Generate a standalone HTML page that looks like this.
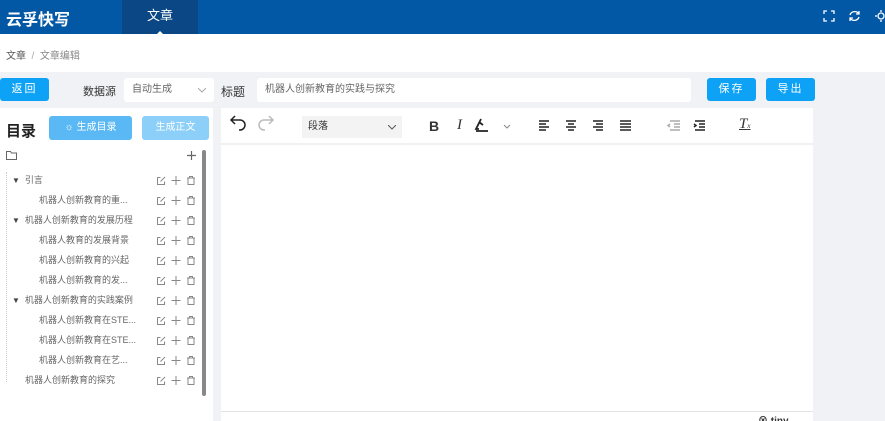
<!DOCTYPE html><html><head><meta charset="utf-8"><style>
*{box-sizing:border-box;margin:0;padding:0}
html,body{width:885px;height:421px;overflow:hidden}
body{background:#f0f2f5;font-family:"Liberation Sans","Noto Sans CJK SC",sans-serif;position:relative;color:#333}
.abs{position:absolute}
.hdr{left:0;top:0;width:885px;height:34px;background:#0358a6}
.btn{background:#0ea2f6;color:#fff;font-size:11px;text-align:center;border-radius:3px;line-height:23px;letter-spacing:2px;height:23px}
.row{position:absolute;left:0;width:200px;height:20px;font-size:9px;color:#666;line-height:20px}
.ic{position:absolute;left:156px;top:5px}
.tb{top:116px}
.tri{margin-left:12px;font-size:8px;color:#444}
</style></head><body>
<svg width="0" height="0" style="position:absolute"><defs>
<g id="ico" fill="none" stroke="#888" stroke-width="1">
<path d="M1.5 2.5h3M1.5 2.5v7h7v-3M4.5 6.5l4.5-4.5"/>
<path d="M20 1v9M15.5 5.5h9"/>
<path d="M31 3h8M33.5 3V1.5h3V3M32 3v6.5h6V3"/>
</g>
</defs></svg>
<div class="abs hdr"></div>
<div class="abs" style="left:6px;top:6px;color:#fff;font-size:16px;font-weight:bold">云孚快写</div>
<div class="abs" style="left:122px;top:0;width:76px;height:34px;background:#0a4784;color:#fff;font-size:13px;text-align:center;line-height:32px">文章</div>
<div class="abs" style="left:157px;top:28px;border:3px solid transparent;border-bottom-color:#fff"></div>
<svg class="abs" style="left:823px;top:10px" width="62" height="14" fill="none" stroke="#fff" stroke-width="1.3">
<path d="M1 4V1h3M8 1h3v3M11 8v3H8M4 11H1V8"/>
<path d="M36 4a5 5 0 0 0-9 1M27 8a5 5 0 0 0 9-1M36 1v3h-3M27 11V8h3"/>
<circle cx="58" cy="6" r="3"/><path d="M58 0v2M58 10v2M52 6h2M62 6h2"/>
</svg>
<div class="abs" style="left:0;top:34px;width:885px;height:38px;background:#fff"></div>
<div class="abs" style="left:6px;top:47px;font-size:10px;color:#555">文章 <span style="color:#aaa">&nbsp;/&nbsp;</span> <span style="color:#888">文章编辑</span></div>
<div class="abs btn" style="left:0;top:78px;width:49px">返回</div>
<div class="abs" style="left:83px;top:83px;font-size:11px;color:#333">数据源</div>
<div class="abs" style="left:124px;top:78px;width:90px;height:24px;background:#fff;border-radius:3px;font-size:10px;color:#666;line-height:24px;padding-left:8px">自动生成<svg style="position:absolute;right:8px;top:10px" width="8" height="5" fill="none" stroke="#aaa"><path d="M0 0l4 4 4-4"/></svg></div>
<div class="abs" style="left:221px;top:83px;font-size:12px;color:#333">标题</div>
<div class="abs" style="left:257px;top:78px;width:434px;height:24px;background:#fff;border-radius:3px;font-size:10px;color:#666;line-height:24px;padding-left:8px">机器人创新教育的实践与探究</div>
<div class="abs btn" style="left:707px;top:78px;width:49px">保存</div>
<div class="abs btn" style="left:766px;top:78px;width:49px">导出</div>
<div class="abs" style="left:0;top:108px;width:213px;height:313px;background:#fff"></div>
<div class="abs" style="left:6px;top:120px;font-size:15px;font-weight:bold;color:#222">目录</div>
<div class="abs" style="left:49px;top:116px;width:83px;height:24px;background:#5ab8f5;color:#fff;font-size:10px;text-align:center;line-height:24px;border-radius:3px">☼ 生成目录</div>
<div class="abs" style="left:142px;top:116px;width:67px;height:24px;background:#8ccff8;color:#fff;font-size:10px;text-align:center;line-height:24px;border-radius:3px">生成正文</div>
<svg class="abs" style="left:6px;top:151px" width="11" height="9" fill="none" stroke="#666"><path d="M.5 .5h4l1 1.5h5v6.5H.5z"/></svg>
<svg class="abs" style="left:187px;top:151px" width="9" height="9" stroke="#666" stroke-width="1.2"><path d="M4.5 0v9M0 4.5h9"/></svg>
<div class="abs" style="left:202px;top:150px;width:4px;height:246px;background:#888;border-radius:2px"></div>
<div class="abs" style="left:6px;top:172px;width:1px;height:210px;border-left:1px dotted #ccc"></div>
<div class="abs" style="left:0;top:170px">
<div class="row" style="top:0"><span class="tri">▼</span>&nbsp; 引言<svg class="ic" width="42" height="11"><use href="#ico"/></svg></div>
<div class="row" style="top:20px"><span style="margin-left:39px">机器人创新教育的重...</span><svg class="ic" width="42" height="11"><use href="#ico"/></svg></div>
<div class="row" style="top:40px"><span class="tri">▼</span>&nbsp; 机器人创新教育的发展历程<svg class="ic" width="42" height="11"><use href="#ico"/></svg></div>
<div class="row" style="top:60px"><span style="margin-left:39px">机器人教育的发展背景</span><svg class="ic" width="42" height="11"><use href="#ico"/></svg></div>
<div class="row" style="top:80px"><span style="margin-left:39px">机器人创新教育的兴起</span><svg class="ic" width="42" height="11"><use href="#ico"/></svg></div>
<div class="row" style="top:100px"><span style="margin-left:39px">机器人创新教育的发...</span><svg class="ic" width="42" height="11"><use href="#ico"/></svg></div>
<div class="row" style="top:120px"><span class="tri">▼</span>&nbsp; 机器人创新教育的实践案例<svg class="ic" width="42" height="11"><use href="#ico"/></svg></div>
<div class="row" style="top:140px"><span style="margin-left:39px">机器人创新教育在STE...</span><svg class="ic" width="42" height="11"><use href="#ico"/></svg></div>
<div class="row" style="top:160px"><span style="margin-left:39px">机器人创新教育在STE...</span><svg class="ic" width="42" height="11"><use href="#ico"/></svg></div>
<div class="row" style="top:180px"><span style="margin-left:39px">机器人创新教育在艺...</span><svg class="ic" width="42" height="11"><use href="#ico"/></svg></div>
<div class="row" style="top:200px"><span style="margin-left:25px">机器人创新教育的探究</span><svg class="ic" width="42" height="11"><use href="#ico"/></svg></div>
</div>
<div class="abs" style="left:221px;top:108px;width:592px;height:313px;background:#fff"></div>
<div class="abs" style="left:221px;top:143px;width:592px;height:2px;background:#f1f1f1"></div>
<div class="abs" style="left:221px;top:411px;width:592px;height:1px;background:#e4e4e4"></div>
<div class="abs" style="left:758px;top:412px;font-size:10px;font-weight:bold;color:#333">⊗ tiny</div>
<svg class="abs" style="left:221px;top:108px" width="540" height="36" fill="none" stroke="#222" stroke-width="1.5">
<path d="M14 14l-4 4 4 4M10 18h9a5 5 0 0 1 0 10h-1" transform="translate(0,-6)"/>
<path d="M48 14l4 4-4 4M52 18h-9a5 5 0 0 0 0 10h1" transform="translate(0,-6)" stroke="#bbb"/>
<path d="M260 11l-5 10h3M258 14l4 3M255 23h12" stroke-width="1.8"/>
<path d="M283 17l3 3 3-3" stroke="#888" stroke-width="1"/>
<path d="M318 13h10M318 16h7M318 19h10M318 22h7"/>
<path d="M345 13h10M347 16h6M345 19h10M347 22h6"/>
<path d="M372 13h10M375 16h7M372 19h10M375 22h7"/>
<path d="M399 13h11M399 16h11M399 19h11M399 22h11"/>
<path d="M449 13h10M453 16h6M453 19h6M449 22h10M449 16l-2 1.5 2 1.5" stroke="#aaa"/>
<path d="M474 13h10M478 16h6M478 19h6M474 22h10M473 16l2 1.5-2 1.5"/>
</svg>
<div class="abs" style="left:302px;top:116px;width:100px;height:22px;background:#f3f3f3;font-size:10px;line-height:22px;padding-left:6px;color:#333">段落<svg style="position:absolute;right:6px;top:9px" width="8" height="5" fill="none" stroke="#555"><path d="M0 0l4 4 4-4"/></svg></div>
<div class="abs tb" style="left:429px;font-weight:bold;font-size:14px;top:118px">B</div>
<div class="abs tb" style="left:457px;font-style:italic;font-family:'Liberation Serif';font-size:15px;top:117px">I</div>
<div class="abs tb" style="left:739px;font-style:italic;font-family:'Liberation Serif';text-decoration:underline;font-size:15px;top:116px">T<span style="font-size:7px">x</span></div>
</body></html>
